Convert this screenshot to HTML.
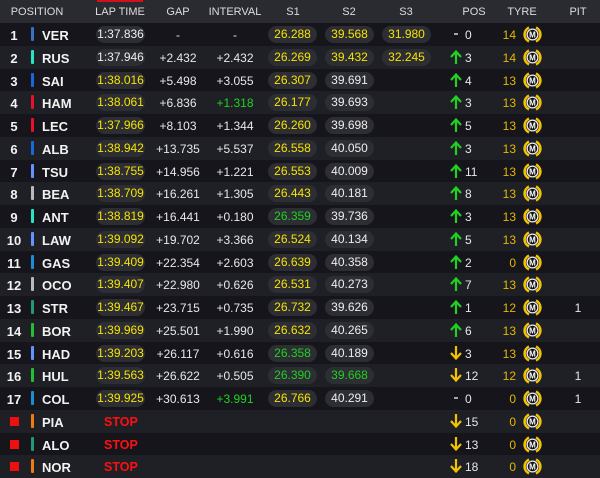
<!DOCTYPE html>
<html><head><meta charset="utf-8"><style>
*{margin:0;padding:0;box-sizing:border-box}
body{width:600px;height:478px;overflow:hidden;background:#17171d;font-family:"Liberation Sans",sans-serif;color:#e8e8e8;position:relative}
.hd{position:absolute;left:0;top:0;width:600px;height:23px;background:#2a2a31;font-size:11px;color:#ddd}
.hd span{position:absolute;top:6px;transform:translateX(-50%);white-space:nowrap}
.red{position:absolute;left:97px;top:0;width:46px;height:2px;background:#d0101a}
.r{position:absolute;left:0;width:600px;height:23px;font-size:12px}
.a{background:#15151b}.b{background:#1f1f26}
.r>*{position:absolute}
.n{left:0;width:28px;text-align:center;top:5px;font-weight:bold;font-size:13px;color:#f2f2f2}
.bar{left:31px;top:4px;width:3px;height:14px;border-radius:1px}
.c{left:42px;top:5px;font-weight:bold;font-size:13px;color:#f2f2f2}
.p{top:3px;width:49px;height:17px;border-radius:8.5px;background:#2d2d34;text-align:center;line-height:17px;font-size:12px}
.lt{left:96px}.s1{left:268px}.s2{left:325px}.s3{left:382px}
.y{color:#f5e400}.g{color:#1ed31e}.w{color:#eee}
.gp{left:150px;width:56px;text-align:center;top:5px}
.iv{left:207px;width:56px;text-align:center;top:5px}
.ar{left:449px;top:3px;width:14px;height:16px}
.pn{left:465px;top:5px}
.tn{left:496px;width:20px;text-align:right;top:5px;color:#e5b800}
.ti{left:523px;top:2px;width:19px;height:19px}
.pit{left:570px;width:16px;text-align:center;top:5px}
.sq{left:10px;top:7px;width:9px;height:9px;background:#ee1010}
.st{left:104px;top:5px;color:#ff1010;font-weight:bold;font-size:12.5px}
</style></head><body>
<svg width="0" height="0" style="position:absolute"><defs>
<symbol id="t" viewBox="0 0 19 19"><path d="M6 2.6A7.6 7.6 0 0 0 6 16.4M13 2.6A7.6 7.6 0 0 1 13 16.4" fill="none" stroke="#f2c200" stroke-width="2.6"/><circle cx="9.5" cy="9.5" r="5.4" fill="#111" stroke="#eee" stroke-width="1.3"/><text x="9.5" y="12.6" font-size="8" font-weight="bold" text-anchor="middle" fill="#fff" font-family="Liberation Sans">M</text></symbol>
<symbol id="u" viewBox="0 0 14 16"><path d="M7 15V3M2 8L7 2.5L12 8" fill="none" stroke="#22d022" stroke-width="2.2"/></symbol>
<symbol id="d" viewBox="0 0 14 16"><path d="M7 1V13M2 8L7 13.5L12 8" fill="none" stroke="#f2c200" stroke-width="2.2"/></symbol>
<symbol id="z" viewBox="0 0 14 16"><path d="M5 8H9" stroke="#ccc" stroke-width="1.6"/></symbol>
</defs></svg>
<div class="hd"><div class="red"></div>
<span style="left:37px">POSITION</span><span style="left:120px">LAP TIME</span><span style="left:178px">GAP</span><span style="left:235px">INTERVAL</span><span style="left:293px">S1</span><span style="left:349px">S2</span><span style="left:406px">S3</span><span style="left:474px">POS</span><span style="left:522px">TYRE</span><span style="left:578px">PIT</span></div>

<div class="r a" style="top:23px"><span class="n">1</span><i class="bar" style="background:#3671c6"></i><span class="c">VER</span><span class="p lt w">1:37.836</span><span class="gp">-</span><span class="iv">-</span><span class="p s1 y">26.288</span><span class="p s2 y">39.568</span><span class="p s3 y">31.980</span><svg class="ar"><use href="#z"/></svg><span class="pn">0</span><span class="tn">14</span><svg class="ti"><use href="#t"/></svg></div>
<div class="r b" style="top:45.75px"><span class="n">2</span><i class="bar" style="background:#27e4c2"></i><span class="c">RUS</span><span class="p lt w">1:37.946</span><span class="gp">+2.432</span><span class="iv">+2.432</span><span class="p s1 y">26.269</span><span class="p s2 y">39.432</span><span class="p s3 y">32.245</span><svg class="ar"><use href="#u"/></svg><span class="pn">3</span><span class="tn">14</span><svg class="ti"><use href="#t"/></svg></div>
<div class="r a" style="top:68.5px"><span class="n">3</span><i class="bar" style="background:#1868db"></i><span class="c">SAI</span><span class="p lt y">1:38.016</span><span class="gp">+5.498</span><span class="iv">+3.055</span><span class="p s1 y">26.307</span><span class="p s2 w">39.691</span><svg class="ar"><use href="#u"/></svg><span class="pn">4</span><span class="tn">13</span><svg class="ti"><use href="#t"/></svg></div>
<div class="r b" style="top:91.25px"><span class="n">4</span><i class="bar" style="background:#e8102a"></i><span class="c">HAM</span><span class="p lt y">1:38.061</span><span class="gp">+6.836</span><span class="iv g">+1.318</span><span class="p s1 y">26.177</span><span class="p s2 w">39.693</span><svg class="ar"><use href="#u"/></svg><span class="pn">3</span><span class="tn">13</span><svg class="ti"><use href="#t"/></svg></div>
<div class="r a" style="top:114px"><span class="n">5</span><i class="bar" style="background:#e8102a"></i><span class="c">LEC</span><span class="p lt y">1:37.966</span><span class="gp">+8.103</span><span class="iv">+1.344</span><span class="p s1 y">26.260</span><span class="p s2 w">39.698</span><svg class="ar"><use href="#u"/></svg><span class="pn">5</span><span class="tn">13</span><svg class="ti"><use href="#t"/></svg></div>
<div class="r b" style="top:136.75px"><span class="n">6</span><i class="bar" style="background:#1868db"></i><span class="c">ALB</span><span class="p lt y">1:38.942</span><span class="gp">+13.735</span><span class="iv">+5.537</span><span class="p s1 y">26.558</span><span class="p s2 w">40.050</span><svg class="ar"><use href="#u"/></svg><span class="pn">3</span><span class="tn">13</span><svg class="ti"><use href="#t"/></svg></div>
<div class="r a" style="top:159.5px"><span class="n">7</span><i class="bar" style="background:#6692ff"></i><span class="c">TSU</span><span class="p lt y">1:38.755</span><span class="gp">+14.956</span><span class="iv">+1.221</span><span class="p s1 y">26.553</span><span class="p s2 w">40.009</span><svg class="ar"><use href="#u"/></svg><span class="pn">11</span><span class="tn">13</span><svg class="ti"><use href="#t"/></svg></div>
<div class="r b" style="top:182.25px"><span class="n">8</span><i class="bar" style="background:#b6babd"></i><span class="c">BEA</span><span class="p lt y">1:38.709</span><span class="gp">+16.261</span><span class="iv">+1.305</span><span class="p s1 y">26.443</span><span class="p s2 w">40.181</span><svg class="ar"><use href="#u"/></svg><span class="pn">8</span><span class="tn">13</span><svg class="ti"><use href="#t"/></svg></div>
<div class="r a" style="top:205px"><span class="n">9</span><i class="bar" style="background:#27e4c2"></i><span class="c">ANT</span><span class="p lt y">1:38.819</span><span class="gp">+16.441</span><span class="iv">+0.180</span><span class="p s1 g">26.359</span><span class="p s2 w">39.736</span><svg class="ar"><use href="#u"/></svg><span class="pn">3</span><span class="tn">13</span><svg class="ti"><use href="#t"/></svg></div>
<div class="r b" style="top:227.75px"><span class="n">10</span><i class="bar" style="background:#6692ff"></i><span class="c">LAW</span><span class="p lt y">1:39.092</span><span class="gp">+19.702</span><span class="iv">+3.366</span><span class="p s1 y">26.524</span><span class="p s2 w">40.134</span><svg class="ar"><use href="#u"/></svg><span class="pn">5</span><span class="tn">13</span><svg class="ti"><use href="#t"/></svg></div>
<div class="r a" style="top:250.5px"><span class="n">11</span><i class="bar" style="background:#1a8fd6"></i><span class="c">GAS</span><span class="p lt y">1:39.409</span><span class="gp">+22.354</span><span class="iv">+2.603</span><span class="p s1 y">26.639</span><span class="p s2 w">40.358</span><svg class="ar"><use href="#u"/></svg><span class="pn">2</span><span class="tn">0</span><svg class="ti"><use href="#t"/></svg></div>
<div class="r b" style="top:273.25px"><span class="n">12</span><i class="bar" style="background:#b6babd"></i><span class="c">OCO</span><span class="p lt y">1:39.407</span><span class="gp">+22.980</span><span class="iv">+0.626</span><span class="p s1 y">26.531</span><span class="p s2 w">40.273</span><svg class="ar"><use href="#u"/></svg><span class="pn">7</span><span class="tn">13</span><svg class="ti"><use href="#t"/></svg></div>
<div class="r a" style="top:296px"><span class="n">13</span><i class="bar" style="background:#229971"></i><span class="c">STR</span><span class="p lt y">1:39.467</span><span class="gp">+23.715</span><span class="iv">+0.735</span><span class="p s1 y">26.732</span><span class="p s2 w">39.626</span><svg class="ar"><use href="#u"/></svg><span class="pn">1</span><span class="tn">12</span><svg class="ti"><use href="#t"/></svg><span class="pit">1</span></div>
<div class="r b" style="top:318.75px"><span class="n">14</span><i class="bar" style="background:#22c030"></i><span class="c">BOR</span><span class="p lt y">1:39.969</span><span class="gp">+25.501</span><span class="iv">+1.990</span><span class="p s1 y">26.632</span><span class="p s2 w">40.265</span><svg class="ar"><use href="#u"/></svg><span class="pn">6</span><span class="tn">13</span><svg class="ti"><use href="#t"/></svg></div>
<div class="r a" style="top:341.5px"><span class="n">15</span><i class="bar" style="background:#6692ff"></i><span class="c">HAD</span><span class="p lt y">1:39.203</span><span class="gp">+26.117</span><span class="iv">+0.616</span><span class="p s1 g">26.358</span><span class="p s2 w">40.189</span><svg class="ar"><use href="#d"/></svg><span class="pn">3</span><span class="tn">13</span><svg class="ti"><use href="#t"/></svg></div>
<div class="r b" style="top:364.25px"><span class="n">16</span><i class="bar" style="background:#22c030"></i><span class="c">HUL</span><span class="p lt y">1:39.563</span><span class="gp">+26.622</span><span class="iv">+0.505</span><span class="p s1 g">26.390</span><span class="p s2 g">39.668</span><svg class="ar"><use href="#d"/></svg><span class="pn">12</span><span class="tn">12</span><svg class="ti"><use href="#t"/></svg><span class="pit">1</span></div>
<div class="r a" style="top:387px"><span class="n">17</span><i class="bar" style="background:#1a8fd6"></i><span class="c">COL</span><span class="p lt y">1:39.925</span><span class="gp">+30.613</span><span class="iv g">+3.991</span><span class="p s1 y">26.766</span><span class="p s2 w">40.291</span><svg class="ar"><use href="#z"/></svg><span class="pn">0</span><span class="tn">0</span><svg class="ti"><use href="#t"/></svg><span class="pit">1</span></div>
<div class="r b" style="top:409.75px"><i class="sq"></i><i class="bar" style="background:#f07c10"></i><span class="c">PIA</span><span class="st">STOP</span><svg class="ar"><use href="#d"/></svg><span class="pn">15</span><span class="tn">0</span><svg class="ti"><use href="#t"/></svg></div>
<div class="r a" style="top:432.5px"><i class="sq"></i><i class="bar" style="background:#229971"></i><span class="c">ALO</span><span class="st">STOP</span><svg class="ar"><use href="#d"/></svg><span class="pn">13</span><span class="tn">0</span><svg class="ti"><use href="#t"/></svg></div>
<div class="r b" style="top:455.25px"><i class="sq"></i><i class="bar" style="background:#f07c10"></i><span class="c">NOR</span><span class="st">STOP</span><svg class="ar"><use href="#d"/></svg><span class="pn">18</span><span class="tn">0</span><svg class="ti"><use href="#t"/></svg></div>
</body></html>
